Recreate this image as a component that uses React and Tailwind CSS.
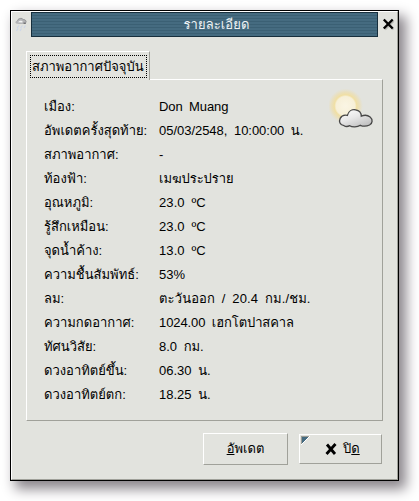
const rows = [
  ['เมือง:', 'Don Muang', 'tracking-[-0.1px]'],
  ['อัพเดตครั้งสุดท้าย:', '05/03/2548, 10:00:00 น.', 'tracking-[-0.03px]'],
  ['สภาพอากาศ:', '-', ''],
  ['ท้องฟ้า:', 'เมฆประปราย', 'tracking-[-0.05px]'],
  ['อุณหภูมิ:', '23.0 ºC', 'tracking-[0.1px]'],
  ['รู้สึกเหมือน:', '23.0 ºC', 'tracking-[0.1px]'],
  ['จุดน้ำค้าง:', '13.0 ºC', 'tracking-[0.1px]'],
  ['ความชื้นสัมพัทธ์:', '53%', ''],
  ['ลม:', 'ตะวันออก / 20.4 กม./ชม.', 'tracking-[0.14px]'],
  ['ความกดอากาศ:', '1024.00 เฮกโตปาสคาล', 'tracking-[-0.1px]'],
  ['ทัศนวิสัย:', '8.0 กม.', ''],
  ['ดวงอาทิตย์ขึ้น:', '06.30 น.', ''],
  ['ดวงอาทิตย์ตก:', '18.25 น.', ''],
];

function AppIcon() {
  return (
    <svg className="mt-[4px] ml-[2px] h-[18px] w-[14px] shrink-0" viewBox="0 0 14 18">
      <path d="M3.500 7.800C1 7.500.8 5.300 3 4.700 4 2.200 8 1.600 9.300 3.600c2.700 0 3.600 2.200 2.200 3.500C10 8.300 6 8.200 3.500 7.800z" fill="#b4b5b7" />
      <path d="M3.500 4.500C4.500 2.200 8 1.600 9.300 3.600c2.500 0 3.400 1.800 2.400 3.200" fill="none" stroke="#919295" strokeWidth="1" />
      <path d="M4 6.300c.8-1.500 2.500-2 4-1.300.8.400.8 1 .2 1.400z" fill="#f2f4f4" />
      <path d="M9.500 7.200l2.300.2" stroke="#66676a" strokeWidth="1.200" />
      <path d="M5 9.500L3 12M8.500 9.500L6.500 12M11.500 9.500L10 12M4 12.500L2.500 15M7.500 12.500L6 15" stroke="#cdd6e8" strokeWidth="1.200" />
    </svg>
  );
}

function CloseMark() {
  return (
    <svg className="mt-[6px] ml-[4px] h-[13px] w-[13px] shrink-0" viewBox="0 0 13 13">
      <path d="M3 3l8.500 8.500M11.500 3L3 11.500" stroke="#b9bab5" strokeWidth="2.200" />
      <path d="M1.800 1.500l8.900 9M10.700 1.500l-8.900 9" stroke="#000" strokeWidth="2.400" />
    </svg>
  );
}

function WeatherIcon() {
  return (
    <svg className="absolute top-[6px] right-[5px] h-12 w-12" viewBox="0 0 48 48">
      <defs>
        <radialGradient id="sun">
          <stop offset="0" stopColor="#faf5e4" />
          <stop offset=".54" stopColor="#f7f0d8" />
          <stop offset=".64" stopColor="#f0dfa4" />
          <stop offset=".8" stopColor="#ecdfb4" stopOpacity=".8" />
          <stop offset="1" stopColor="#e8dfc0" stopOpacity="0" />
        </radialGradient>
        <linearGradient id="cloud" x1="0" y1="0" x2=".7" y2="1">
          <stop offset="0" stopColor="#fff" />
          <stop offset=".5" stopColor="#e8e8e8" />
          <stop offset="1" stopColor="#c0c0c0" />
        </linearGradient>
      </defs>
      <circle cx="16.500" cy="20" r="17.500" fill="url(#sun)" />
      <path d="M15 39.700c-4.200-.5-5.300-4.200-3.800-7.300 1.300-2.600 4.100-3.700 7.200-3 1-4.300 4.600-6.200 8.200-5.600 3.600.6 5.700 3.100 5.700 6.400 3.100-1.400 6.700-.9 8.800.8 3 2.600 2.500 6.300-.6 8-3 1.500-6.600 1.400-9.200.3-3 2-8 2.200-10.600.4-2 1-4.200.9-5.700 0z" fill="url(#cloud)" stroke="#484848" strokeWidth="1.300" />
    </svg>
  );
}

export default function App() {
  return (
    <div className="h-[501px] w-[419px] overflow-hidden bg-white pt-[10px] pl-[10px] font-['Liberation_Sans','Loma','Noto_Sans_Thai',sans-serif] text-[13px] text-black">
      <div className="flex h-[471px] w-[389px] flex-col border border-black bg-[#e2e3de] shadow-[6px_7px_12px_1px_#8a858b]">
        <div className="flex h-full flex-col border border-t-white border-r-[#a0a19a] border-b-[#a0a19a] border-l-white">
          <div className="flex h-[25px] shrink-0">
            <AppIcon />
            <div className="ml-[3px] flex h-[25px] w-[347px] items-center justify-center border border-[#172f3d] bg-[repeating-linear-gradient(180deg,#456b80_0px,#456b80_2px,#3b6074_2px,#3b6074_3px)] pl-[24px] leading-5 tracking-[0.1px] text-[#eef3f5]">
              รายละเอียด
            </div>
            <CloseMark />
          </div>

          <div className="mt-[14px] ml-[14px] w-[357px]">
            <div className="relative z-10 -mb-px h-[29px] w-[124px] border-t border-r border-l border-t-white border-r-[#a0a19a] border-l-white bg-[#e2e3de] pt-[3px] pl-[3px]">
              <div className="flex h-[23px] w-[117px] items-center border border-dotted border-black pl-px whitespace-nowrap">
                สภาพอากาศปัจจุบัน
              </div>
            </div>
            <div className="relative h-[342px] border border-t-white border-r-[#a0a19a] border-b-[#a0a19a] border-l-white pt-[15px] pl-[17px]">
              {rows.map(([label, value, tracking]) => (
                <div key={label} className="flex h-6 items-center whitespace-nowrap">
                  <span className="w-[115px]">{label}</span>
                  <span className={`[word-spacing:3px] ${tracking}`}>{value}</span>
                </div>
              ))}
              <WeatherIcon />
            </div>
          </div>

          <div className="mt-3 flex items-center gap-[11px] pl-[191px]">
            <button className="flex h-8 w-[85px] items-center justify-center border border-t-white border-r-[#a0a19a] border-b-[#a0a19a] border-l-white">
              <span><span className="underline">อั</span>พเดต</span>
            </button>
            <button className="relative flex h-[30px] w-[83px] items-center border border-t-white border-r-[#a0a19a] border-b-[#a0a19a] border-l-white pl-[25px]">
              <svg className="absolute top-[1px] left-[1px] h-[9px] w-[9px]" viewBox="0 0 9 9">
                <path d="M0 0h9L0 9z" fill="#9b9c96" />
                <path d="M1 1h7L1 8z" fill="#456b80" />
                <path d="M9 0L0 9" stroke="#fff" strokeWidth="1" />
              </svg>
              <svg className="h-3 w-3" viewBox="0 0 12 12">
                <path d="M2 1.500l8 9.500M10.500 1L1.500 11" stroke="#000" strokeWidth="2.800" />
              </svg>
              <span className="ml-[6px]">ปิ<span className="underline">ด</span></span>
            </button>
          </div>
        </div>
      </div>
    </div>
  );
}
